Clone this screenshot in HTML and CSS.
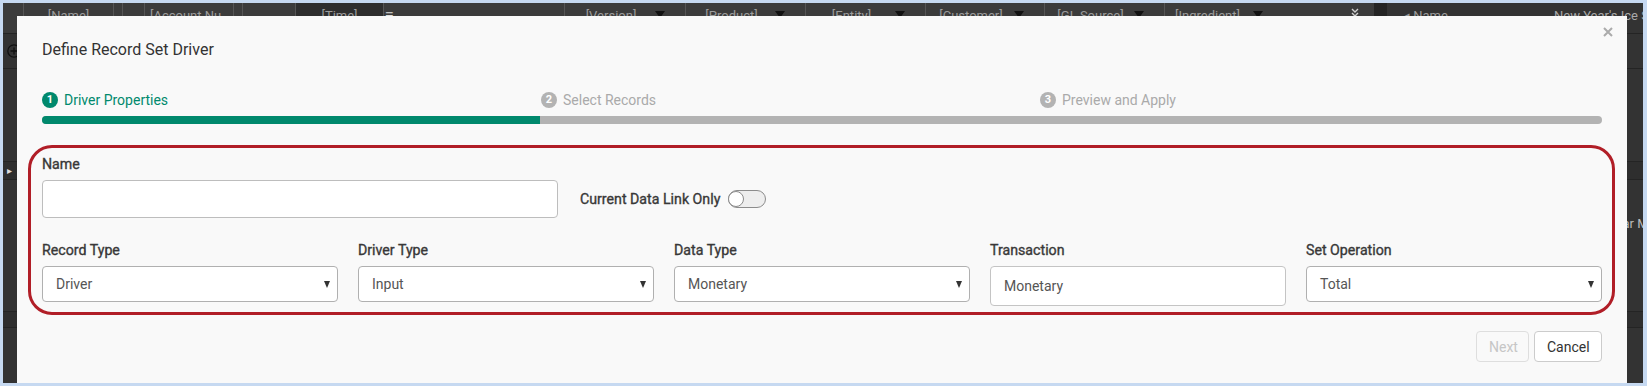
FILE: index.html
```html
<!DOCTYPE html>
<html>
<head>
<meta charset="utf-8">
<link rel="stylesheet" href="styles.css">
</head>
<body>
<div class="app">
  <div class="grid-head">
    <div class="hc w21"></div>
    <div class="hc w90 center">[Name]</div>
    <div class="hc w9"></div>
    <div class="hc w22"></div>
    <div class="hc w89 left">[Account Nu</div>
    <div class="hc w9"></div>
    <div class="hc w53"></div>
    <div class="hc w88 center dark">[Time]</div>
    <div class="hc w181 left"><span class="menu-ic">&#8801;</span></div>
    <div class="hc w121"><span class="ht">[Version]</span><span class="hcaret"></span></div>
    <div class="hc w120"><span class="ht">[Product]</span><span class="hcaret"></span></div>
    <div class="hc w120"><span class="ht">[Entity]</span><span class="hcaret"></span></div>
    <div class="hc w119"><span class="ht">[Customer]</span><span class="hcaret"></span></div>
    <div class="hc w120"><span class="ht">[GL Source]</span><span class="hcaret"></span></div>
    <div class="hc w209"><span class="ht ing">[Ingredient]</span><span class="hcaret"></span><span class="chev"><svg width="8" height="9" viewBox="0 0 8 9"><path d="M1 1l3 3 3-3M1 5l3 3 3-3" fill="none" stroke="#cfcfcf" stroke-width="1.4"/></svg></span></div>
    <div class="hc splitter"></div>
    <div class="hc rightpanel"><span class="rp-name">&#9666; Name</span><span class="rp-val">New Year's Ice Sculpture</span></div>
  </div>
  <div class="grid-body">
    <div class="grow r1"><span class="plus-ic"><svg width="14" height="14" viewBox="0 0 14 14"><circle cx="7" cy="7" r="6.2" fill="none" stroke="#111" stroke-width="1.3"/><path d="M7 3.5v7M3.5 7h7" stroke="#111" stroke-width="1.3"/></svg></span></div>
    <div class="grow r2"></div>
    <div class="grow r3"><span class="exp">&#9656;</span></div>
    <div class="grow r4"><span class="cell-txt">New Year Mix</span></div>
    <div class="grow r5"></div>
    <div class="grow r6"></div>
  </div>

  <div class="modal">
    <div class="modal-head">
      <h1 class="modal-title">Define Record Set Driver</h1>
      <button class="close" aria-label="Close"><svg width="10" height="10" viewBox="0 0 10 10"><path d="M1 1L9 9M9 1L1 9" stroke="#ababab" stroke-width="2"/></svg></button>
    </div>
    <div class="steps">
      <div class="step active"><span class="num">1</span><span class="step-label">Driver Properties</span></div>
      <div class="step"><span class="num">2</span><span class="step-label">Select Records</span></div>
      <div class="step last"><span class="num">3</span><span class="step-label">Preview and Apply</span></div>
    </div>
    <div class="track"><div class="fill" style="width:498px"></div></div>

    <div class="highlight">
      <div class="row1">
        <div class="field name-field">
          <label class="lbl">Name</label>
          <div class="input name-input"></div>
        </div>
        <div class="toggle-field">
          <span class="lbl">Current Data Link Only</span>
          <span class="switch"><span class="knob"></span></span>
        </div>
      </div>
      <div class="row2">
        <div class="field">
          <label class="lbl">Record Type</label>
          <div class="select"><span>Driver</span><span class="caret"></span></div>
        </div>
        <div class="field">
          <label class="lbl">Driver Type</label>
          <div class="select"><span>Input</span><span class="caret"></span></div>
        </div>
        <div class="field">
          <label class="lbl">Data Type</label>
          <div class="select"><span>Monetary</span><span class="caret"></span></div>
        </div>
        <div class="field">
          <label class="lbl">Transaction</label>
          <div class="input tx-input">Monetary</div>
        </div>
        <div class="field">
          <label class="lbl">Set Operation</label>
          <div class="select"><span>Total</span><span class="caret"></span></div>
        </div>
      </div>
    </div>

    <div class="footer">
      <button class="btn next" disabled>Next</button>
      <button class="btn cancel">Cancel</button>
    </div>
  </div>
</div>
</body>
</html>
```

FILE: styles.css
```css
* { box-sizing: border-box; }

body {
  margin: 0;
  background: #c6d9f1;
  font-family: Roboto, "Liberation Sans", sans-serif;
}

.app {
  position: relative;
  margin: 3px 4px 3px 3px;
  height: 380px;
  background: #333333;
  overflow: hidden;
}

/* background grid */
.grid-head {
  display: flex;
  height: 30px;
  background: #3b3b3b;
}
.hc {
  flex: none;
  height: 30px;
  border-right: 1px solid #555;
  display: flex;
  align-items: flex-start;
  padding-top: 5px;
  font-size: 13px;
  line-height: 15px;
  color: #9c9c9c;
  white-space: nowrap;
  overflow: hidden;
}
.hc.center { justify-content: center; }
.hc.left { padding-left: 5px; }
.hc.dark { background: #2e2e2e; }
.w21 { width: 21px; }
.w90 { width: 90px; }
.w9 { width: 9px; }
.w22 { width: 22px; }
.w89 { width: 89px; }
.w53 { width: 53px; }
.w88 { width: 88px; }
.w181 { width: 181px; }
.w121 { width: 121px; }
.w120 { width: 120px; }
.w119 { width: 119px; }
.w209 { width: 209px; border-right: none; }
.menu-ic { color: #ddd; font-size: 14px; margin-left: -4px; }
.ht { flex: 1; text-align: center; padding-left: 6px; }
.ht.ing { flex: none; width: 74px; margin-left: 10px; padding-left: 0; text-align: left; }
.hcaret {
  flex: none;
  width: 0; height: 0;
  margin: 3px 20px 0 4px;
  border-left: 5px solid transparent;
  border-right: 5px solid transparent;
  border-top: 7px solid #111;
}
.chev { flex: none; display: flex; margin: 0 0 0 68px; }
.splitter { width: 13px; background: #242424; border-right: none; }
.rightpanel { flex: 1; border-right: none; background: #333; }
.rp-name { flex: none; margin-left: 16px; width: 151px; }
.rp-val { flex: none; color: #a9a9a9; }

.grid-body { display: flex; flex-direction: column; }
.grow { border-top: 1px solid #242424; display: flex; align-items: center; }
.r1 { height: 35px; }
.r2 { height: 93px; }
.r3 { height: 18px; background: #2e2e2e; }
.r4 { height: 132px; align-items: flex-start; padding-top: 36px; }
.r5 { height: 16px; background: #2e2e2e; }
.r6 { height: 60px; }
.plus-ic { margin-left: 4px; display: flex; }
.exp { color: #ddd; font-size: 10px; margin-left: 4px; }
.cell-txt { flex: none; margin-left: 1576px; color: #bbb; font-size: 13px; white-space: nowrap; }

/* modal */
.modal {
  position: absolute;
  left: 14px;
  top: 13px;
  width: 1610px;
  height: 380px;
  background: #f9f9f9;
  padding: 0 25px;
  color: #333;
}
.modal-head {
  display: flex;
  justify-content: space-between;
  align-items: flex-start;
}
.close {
  flex: none;
  margin: 11px -11px 0 0;
  width: 10px;
  height: 10px;
  padding: 0;
  border: 0;
  background: none;
  display: flex;
}
.modal-title {
  margin: 24px 0 0;
  font-size: 16px;
  line-height: 20px;
  font-weight: 400;
  color: #333;
}

.steps {
  display: flex;
  margin-top: 31px;
  height: 18px;
}
.step {
  width: 499px;
  display: flex;
  align-items: center;
  gap: 6px;
  font-size: 14px;
  line-height: 18px;
  color: #aaaaaa;
}
.step.last { flex: 1; }
.num {
  width: 16px;
  height: 16px;
  border-radius: 50%;
  background: #b3b3b3;
  color: #fff;
  font-size: 11px;
  font-weight: 700;
  line-height: 16px;
  text-align: center;
}
.step.active { color: #00896d; }
.step.active .num { background: #00896d; }

.track {
  margin-top: 7px;
  height: 8px;
  border-radius: 4px;
  background: #b3b3b3;
  overflow: hidden;
}
.fill { height: 8px; background: #00896d; }

.highlight {
  margin: 21px -13px 0 -14px;
  height: 170px;
  border: 3px solid #b11e27;
  border-radius: 24px;
  padding: 8px 10px 0 11px;
}
.lbl {
  display: block;
  font-size: 14.2px;
  line-height: 16px;
  font-weight: 400;
  color: #383838;
  -webkit-text-stroke: 0.35px #383838;
}
.field .lbl { margin-bottom: 8px; }

.row1 { display: flex; align-items: flex-end; }
.name-field { width: 516px; }
.input {
  background: #fff;
  border: 1px solid #c4c4c4;
  border-radius: 4px;
}
.name-input { height: 38px; border-color: #bdbdbd; }
.toggle-field {
  height: 38px;
  display: flex;
  align-items: center;
  margin-left: 22px;
  gap: 8px;
}
.switch {
  width: 38px;
  height: 18px;
  border: 1px solid #8c8c8c;
  border-radius: 9px;
  background: #eeeeee;
  display: flex;
  align-items: center;
}
.knob {
  width: 16px;
  height: 16px;
  border-radius: 50%;
  background: #fff;
  border: 1px solid #8c8c8c;
  margin-left: -1px;
}

.row2 {
  display: grid;
  grid-template-columns: repeat(5, 296px);
  column-gap: 20px;
  margin-top: 24px;
  align-items: start;
}
.select {
  height: 36px;
  background: #fff;
  border: 1px solid #b0b0b0;
  border-radius: 4px;
  display: flex;
  align-items: center;
  justify-content: space-between;
  padding: 0 7px 0 13px;
  font-size: 14px;
  color: #555;
}
.caret {
  width: 0; height: 0;
  border-left: 3.5px solid transparent;
  border-right: 3.5px solid transparent;
  border-top: 7px solid #333;
}
.tx-input {
  height: 40px;
  display: flex;
  align-items: center;
  padding-left: 13px;
  font-size: 14px;
  color: #555;
}

.footer {
  display: flex;
  justify-content: flex-end;
  gap: 5px;
  margin-top: 16px;
}
.btn {
  height: 31px;
  padding: 0 12px;
  border-radius: 4px;
  font-family: Roboto, "Liberation Sans", sans-serif;
  font-size: 14px;
}
.btn.next {
  width: 53px;
  background: #f9f9f9;
  border: 1px solid #dedede;
  color: #c6c6c6;
}
.btn.cancel {
  width: 68px;
  background: #fff;
  border: 1px solid #cccccc;
  color: #333;
}
```
